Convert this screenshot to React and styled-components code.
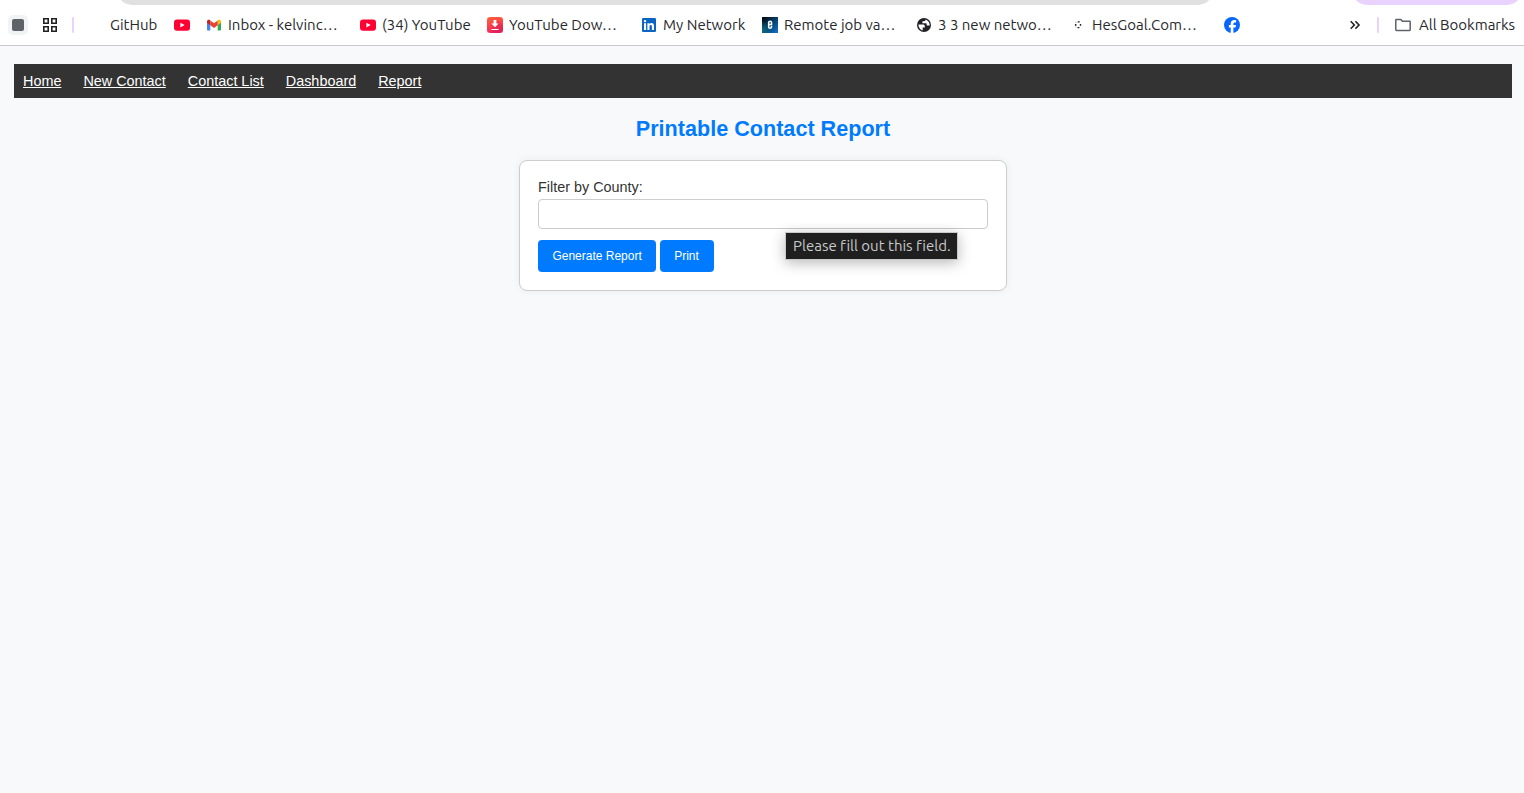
import React from "react";
import styled, { createGlobalStyle } from "styled-components";

const GlobalStyle = createGlobalStyle`
  * { box-sizing: border-box; }
  body {
    margin: 0;
    background: #f8f9fb;
    color: #333;
    font-family: "Liberation Sans", Arial, sans-serif;
    font-size: 14.4px;
  }
`;

const Screen = styled.div`
  height: 793px;
  display: flex;
  flex-direction: column;
  overflow: hidden;
`;

const BrowserChrome = styled.header`
  height: 46px;
  flex: none;
  background: #fff;
  border-bottom: 1px solid #c9c9cb;
`;

const ToolbarEdge = styled.div`
  height: 5px;
  display: flex;
  justify-content: space-between;
  padding: 0 2px 0 117px;
  overflow: hidden;
`;

const Pill = styled.div`
  width: ${(p) => p.$width}px;
  height: 30px;
  margin-top: -25px;
  border-radius: 17px;
  background: ${(p) => p.$color};
`;

const BookmarkBar = styled.div`
  height: 40px;
  display: flex;
  align-items: center;
  padding-left: 8px;
  color: #27282c;
  font-family: Ubuntu, "Noto Sans", sans-serif;
  font-size: 15px;
`;

const GroupButton = styled.div`
  width: 20px;
  height: 20px;
  border-radius: 5px;
  background: #f1f3f4;
  display: grid;
  place-items: center;
  margin-right: 14px;

  &::after {
    content: "";
    width: 12px;
    height: 12px;
    border-radius: 2px;
    background: #5f6368;
  }
`;

const Divider = styled.div`
  width: 2px;
  height: 16px;
  border-radius: 1px;
  background: #e9d2fd;
  margin: 0 ${(p) => p.$after}px 0 ${(p) => p.$before}px;
`;

const Bookmark = styled.div`
  display: flex;
  align-items: center;
  flex: none;
  gap: ${(p) => p.$gap ?? 6}px;
  margin-right: ${(p) => p.$after ?? 17}px;
`;

const IconSlot = styled.span`
  width: 16px;
  height: 16px;
  flex: none;

  svg { display: block; }
`;

const Label = styled.span`
  width: ${(p) => p.$width}px;
  white-space: nowrap;
  line-height: 20px;
`;

const Overflow = styled.div`
  margin-left: auto;
  display: flex;
  align-items: center;
`;

const Page = styled.main`
  flex: 1;
  padding: 18px 12px 0 14px;
`;

const Nav = styled.nav`
  height: 34px;
  display: flex;
  align-items: center;
  gap: 22px;
  padding: 0 9px;
  background: #333;
`;

const NavLink = styled.a`
  color: #fff;
  line-height: 16px;
  text-decoration: underline;
`;

const Title = styled.h1`
  margin: 18px 0;
  color: #007bff;
  font-size: 21.6px;
  line-height: 26px;
  text-align: center;
`;

const Card = styled.form`
  width: 488px;
  height: 131px;
  margin: 0 auto;
  padding: 18px;
  background: #fff;
  border: 1px solid #ccc;
  border-radius: 8px;
  box-shadow: 0 0 9px rgba(0, 0, 0, 0.06);
`;

const FieldLabel = styled.label`
  display: block;
  height: 20px;
  line-height: 17px;
`;

const Field = styled.div`
  position: relative;
  margin-bottom: 11px;
`;

const Input = styled.input`
  display: block;
  width: 100%;
  height: 30px;
  padding: 7px;
  background: #fff;
  border: 1px solid #ccc;
  border-radius: 4px;
  outline: none;
`;

const Tooltip = styled.div`
  position: absolute;
  left: 247px;
  top: 33px;
  width: 173px;
  height: 28px;
  padding-left: 7px;
  border: 1px solid #c9c9c9;
  background: #1f1f1f;
  color: #c9c9c9;
  font-family: Ubuntu, "Noto Sans", sans-serif;
  font-size: 15px;
  font-variant-ligatures: none;
  line-height: 25px;
  white-space: nowrap;
  box-shadow: 0 3px 14px rgba(0, 0, 0, 0.28);
`;

const Actions = styled.div`
  display: flex;
  gap: 4px;
`;

const Button = styled.button`
  width: ${(p) => p.$width}px;
  height: 32px;
  padding: ${(p) => p.$padding};
  border: 0;
  border-radius: 4px;
  background: #007bff;
  color: #fff;
  font: 12px "Liberation Sans", Arial, sans-serif;
  text-align: left;
`;

const Svg = (props) => <svg width="16" height="16" viewBox="0 0 16 16" {...props} />;

const AppsIcon = () => (
  <Svg fill="none" stroke="#202124" strokeWidth="1.6">
    <path d="M1.8 1.8h4.4v4.4h-4.4zM9.8 1.8h4.4v4.4h-4.4zM1.8 9.8h4.4v4.4h-4.4zM9.8 9.8h4.4v4.4h-4.4z" />
  </Svg>
);

const YouTubeIcon = () => (
  <Svg>
    <rect y="2.4" width="16" height="11.4" rx="3" fill="#ff0033" />
    <path d="M6.4 5.7v4.8l4.2-2.4z" fill="#fff" />
  </Svg>
);

const GmailIcon = () => (
  <Svg>
    <path d="M1 4v8.5c0 .6.4 1 1 1h2.3V6.4z" fill="#4285f4" />
    <path d="M15 4v8.5c0 .6-.4 1-1 1h-2.3V6.4z" fill="#34a853" />
    <path d="M11.7 4.1V8.3L15 5.8V4.4c0-1.7-1.9-2.2-2.9-1.3z" fill="#fbbc04" />
    <path d="M1 4.4v1.4l3.3 2.5V4.1l-.4-1C2.9 2.2 1 2.7 1 4.4z" fill="#c5221f" />
    <path d="M4.3 8.3V3.4L8 6.2l3.7-2.8v4.9L8 11.1z" fill="#ea4335" />
  </Svg>
);

const DownloaderIcon = () => (
  <Svg>
    <defs>
      <linearGradient id="downloader" x1="0" y1="0" x2=".3" y2="1">
        <stop offset="0" stopColor="#ff6337" />
        <stop offset="1" stopColor="#f4265f" />
      </linearGradient>
    </defs>
    <rect width="16" height="16" rx="3.2" fill="url(#downloader)" />
    <path d="M9.8 3l6.2 6v4.5c0 1.5-1 2.5-2.5 2.5H7l-3-3z" fill="#a51645" opacity=".22" />
    <path d="M6.6 3h2.8v3.6h2.2L8 10.2 4.4 6.6h2.2zM4.4 11.9h7.2v1.1H4.4z" fill="#fff" />
  </Svg>
);

const LinkedInIcon = () => (
  <Svg>
    <rect x="1" y="1" width="14" height="14" rx="1.2" fill="#0a66c2" />
    <path
      fill="#fff"
      d="M3 6.3h2.1V13H3zM4.05 2.9a1.2 1.2 0 1 1 0 2.4 1.2 1.2 0 0 1 0-2.4zM6.4 6.3h2v.9c.4-.7 1.1-1.1 2-1.1 2 0 2.6 1.2 2.6 3.2V13h-2.1V9.7c0-.9-.1-1.8-1.2-1.8s-1.2.9-1.2 1.8V13H6.4z"
    />
  </Svg>
);

const RemoteJobIcon = () => (
  <Svg>
    <defs>
      <linearGradient id="remote" x1="0" y1="0" x2="1" y2="1">
        <stop offset=".1" stopColor="#031019" />
        <stop offset=".65" stopColor="#07508a" />
        <stop offset="1" stopColor="#1673cf" />
      </linearGradient>
      <radialGradient id="remoteGlow" cx="0" cy=".85" r=".6">
        <stop offset="0" stopColor="#0f6d80" />
        <stop offset="1" stopColor="#0f6d80" stopOpacity="0" />
      </radialGradient>
    </defs>
    <path d="M0 0h16v16H0z" fill="url(#remote)" />
    <path d="M0 0h16v16H0z" fill="url(#remoteGlow)" />
    <path d="M6.7 7.5h2.8V5.2c0-.7-.5-1-1.4-1s-1.4.3-1.4 1v4.9c0 .8.5 1.200 1.400 1.200s1.400-.4 1.400-1.200V8.800" fill="none" stroke="#f2f8fc" strokeWidth="1.6" />
  </Svg>
);

const GlobeIcon = () => (
  <Svg>
    <circle cx="8" cy="8" r="7" fill="#202124" />
    <path
      fill="#fff"
      d="M2.400 7.500h4.200c1.600 0 2.200.7 2.200 1.700v1.300H6.700v2.900C4.200 12.800 2.300 10.500 2.400 7.500z"
    />
    <path
      fill="#fff"
      d="M9.500 2.600c.2 1-.5 1.700-1.600 1.700H6.400v1.900h3.300c.7 0 1 .5 1 1.200v1.100h2.900c.1-.5.1-.9 0-1.400-.4-2.200-2-3.900-4.100-4.500z"
    />
  </Svg>
);

const BallIcon = () => (
  <Svg>
    <path
      fill="#222"
      d="M7.700 4.200h2v1.300h-2zM9.800 6.900h1.400v1.900H9.800zM7.500 10h1.900v1.300H7.500zM4.900 6.900h1.500v1.800H4.900z"
    />
    <path fill="#999" d="M5.500 5.200h1.100v.8H5.500zM5.300 9.500h1.100v.8H5.300z" />
  </Svg>
);

const FacebookIcon = () => (
  <Svg>
    <circle cx="8" cy="8" r="8" fill="#0866ff" />
    <path
      fill="#fff"
      d="M6.7 15.9v-5.3H4.9V8.1h1.8V7c0-2.7 1.2-3.9 3.8-3.9.5 0 1.2.1 1.6.2v2.3l-.9-.1c-1.3 0-1.8.5-1.8 1.7v.9h2.6l-.5 2.5H9.4v5.3a8 8 0 0 1-2.7 0z"
    />
  </Svg>
);

const ChevronsIcon = () => (
  <Svg fill="none" stroke="#202124" strokeWidth="1.6">
    <path d="M3.7 4.3L7.3 8l-3.6 3.7M8.4 4.3L12 8l-3.6 3.7" />
  </Svg>
);

const FolderIcon = () => (
  <Svg fill="none" stroke="#5f6368" strokeWidth="1.5" strokeLinejoin="round">
    <path d="M.8 3.1c0-.4.3-.6.6-.6h4.5l1.6 1.8h7.1c.4 0 .6.3.6.6v7.9c0 .4-.3.6-.6.6H1.4c-.4 0-.6-.3-.6-.6z" />
  </Svg>
);

const bookmarks = [
  { label: "GitHub", width: 47 },
  { icon: YouTubeIcon, after: 16 },
  { icon: GmailIcon, label: "Inbox - kelvinc…", width: 115 },
  { icon: YouTubeIcon, label: "(34) YouTube", width: 88 },
  { icon: DownloaderIcon, label: "YouTube Dow…", width: 115 },
  { icon: LinkedInIcon, label: "My Network", width: 82 },
  { icon: RemoteJobIcon, label: "Remote job va…", width: 115 },
  { icon: GlobeIcon, label: "3 3 new netwo…", width: 115 },
  { icon: BallIcon, label: "HesGoal.Com…", width: 115 },
  { icon: FacebookIcon },
];

const links = ["Home", "New Contact", "Contact List", "Dashboard", "Report"];

export default function App() {
  return (
    <Screen>
      <GlobalStyle />
      <BrowserChrome>
        <ToolbarEdge>
          <Pill $width={1096} $color="#e0e0e0" />
          <Pill $width={170} $color="#e9d2fd" />
        </ToolbarEdge>
        <BookmarkBar>
          <GroupButton />
          <IconSlot><AppsIcon /></IconSlot>
          <Divider $before={14} $after={14} />
          {bookmarks.map(({ icon: Icon, label, width, after }, i) => (
            <Bookmark key={i} $after={after}>
              <IconSlot>{Icon && <Icon />}</IconSlot>
              {label && <Label $width={width}>{label}</Label>}
            </Bookmark>
          ))}
          <Overflow>
            <IconSlot><ChevronsIcon /></IconSlot>
            <Divider $before={14} $after={16} />
            <Bookmark $gap={8} $after={9}>
              <IconSlot><FolderIcon /></IconSlot>
              <Label $width={96}>All Bookmarks</Label>
            </Bookmark>
          </Overflow>
        </BookmarkBar>
      </BrowserChrome>
      <Page>
        <Nav>
          {links.map((link) => <NavLink key={link} href="#">{link}</NavLink>)}
        </Nav>
        <Title>Printable Contact Report</Title>
        <Card>
          <FieldLabel htmlFor="county">Filter by County:</FieldLabel>
          <Field>
            <Input id="county" required />
            <Tooltip role="tooltip">Please fill out this field.</Tooltip>
          </Field>
          <Actions>
            <Button type="button" $width={118} $padding="0 0 0 14.4px">Generate Report</Button>
            <Button type="button" $width={54} $padding="0 0 0 14.2px">Print</Button>
          </Actions>
        </Card>
      </Page>
    </Screen>
  );
}
